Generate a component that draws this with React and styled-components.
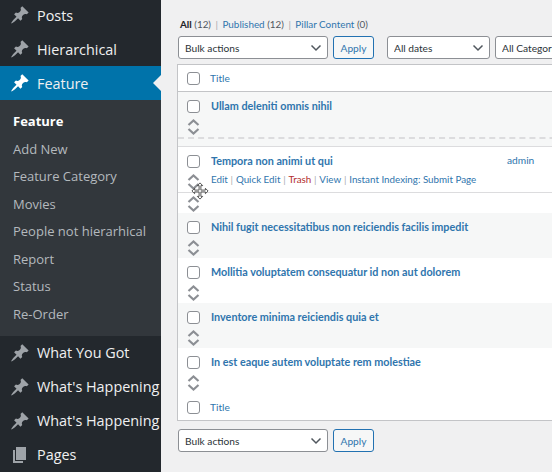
import React from "react";
import styled, { createGlobalStyle } from "styled-components";

const GlobalStyle = createGlobalStyle`
  html, body {
    margin: 0;
    height: 100%;
    overflow: hidden;
    background: #f0f0f1;
  }
  #root {
    height: 100%;
  }
`;

const PIN =
  "M10.44 3.02l1.82-1.82 6.36 6.35-1.83 1.82c-1.05-.68-2.48-.57-3.41.36l-.75.75c-.92.93-1.04 2.35-.35 3.41l-1.83 1.82-2.41-2.41-2.8 2.79c-.42.42-3.38 2.71-3.8 2.29s1.86-3.39 2.28-3.81l2.79-2.79L4.1 9.36l1.83-1.82c1.05.69 2.48.57 3.41-.36l.75-.75c.93-.92 1.04-2.35.35-3.41z";
const PAGE = "M6 15V2h10v13H6zm-1 1h8v2H3V5h2v11z";

const chevron =
  "url(\"data:image/svg+xml,%3Csvg xmlns='http://www.w3.org/2000/svg' width='12' height='8'%3E%3Cpath d='M1.5 1.5 6 6l4.500-4.500' fill='none' stroke='%2350575e' stroke-width='1.5'/%3E%3C/svg%3E\")";

const topItems = [
  { label: "Posts", icon: PIN },
  { label: "Hierarchical", icon: PIN },
];
const subItems = [
  "Add New",
  "Feature Category",
  "Movies",
  "People not hierarhical",
  "Report",
  "Status",
  "Re-Order",
];
const bottomItems = [
  { label: "What You Got", icon: PIN },
  { label: "What's Happening", icon: PIN },
  { label: "What's Happening", icon: PIN },
  { label: "Pages", icon: PAGE },
];
const actions = [
  { label: "Edit" },
  { label: "Quick Edit" },
  { label: "Trash", danger: true },
  { label: "View" },
  { label: "Instant Indexing: Submit Page" },
];

const MenuIcon = ({ d, $active }) => (
  <MenuGlyph viewBox="0 0 20 20" $active={$active}>
    <path d={d} />
  </MenuGlyph>
);

const MenuItem = ({ label, icon, active }) => (
  <MenuRow $active={active}>
    <MenuIcon d={icon} $active={active} />
    <MenuLabel>{label}</MenuLabel>
    {active && <MenuNotch />}
  </MenuRow>
);

const SortArrows = () => (
  <Arrows viewBox="0 0 14 16">
    <path d="M1.500 6l5-4.500 5 4.500M1.500 10l5 4.500 5-4.500" />
  </Arrows>
);

const BulkBar = () => (
  <Bulk>
    <Select $width={150}>
      <option>Bulk actions</option>
    </Select>
    <ApplyButton>Apply</ApplyButton>
  </Bulk>
);

const PostRow = ({ title, alt, author, children }) => (
  <Row $alt={alt}>
    <CheckCol>
      <Checkbox />
      <SortArrows />
    </CheckCol>
    <TitleCol>
      <PostTitle>{title}</PostTitle>
      {children}
    </TitleCol>
    {author && <Author>{author}</Author>}
  </Row>
);

export default function App() {
  return (
    <>
      <GlobalStyle />
      <Page>
        <Sidebar>
          {topItems.map((item) => (
            <MenuItem key={item.label} {...item} />
          ))}
          <MenuItem label="Feature" icon={PIN} active />
          <SubMenu>
            <SubItem $current>Feature</SubItem>
            {subItems.map((item) => (
              <SubItem key={item}>{item}</SubItem>
            ))}
          </SubMenu>
          <LowerMenu>
            {bottomItems.map((item, index) => (
              <MenuItem key={index} {...item} />
            ))}
          </LowerMenu>
        </Sidebar>
        <Main>
          <Filters>
            <strong>All</strong> <Count>(12)</Count>
            <Sep>|</Sep>
            <a>Published</a> <Count>(12)</Count>
            <Sep>|</Sep>
            <a>Pillar Content</a> <Count>(0)</Count>
          </Filters>
          <TopBar>
            <BulkBar />
            <Select $width={103}>
              <option>All dates</option>
            </Select>
            <Select $width={130}>
              <option>All Categories</option>
            </Select>
          </TopBar>
          <Table>
            <HeadRow>
              <Checkbox />
              <HeadTitle>Title</HeadTitle>
            </HeadRow>
            <PostRow title="Ullam deleniti omnis nihil" alt />
            <DropSlot />
            <PostRow title="Tempora non animi ut qui" author="admin">
              <RowActions>
                {actions.map((action, index) => (
                  <React.Fragment key={action.label}>
                    {index > 0 && <ActionSep>|</ActionSep>}
                    <Action $danger={action.danger}>{action.label}</Action>
                  </React.Fragment>
                ))}
              </RowActions>
              <DragCursor viewBox="0 0 20 20">
                <path d="M10 1l3 3h-2v5h5V7l3 3-3 3v-2h-5v5h2l-3 3-3-3h2v-5H4v2l-3-3 3-3v2h5V4H7z" />
              </DragCursor>
            </PostRow>
            <GhostRow>
              <SortArrows />
            </GhostRow>
            <PostRow title="Nihil fugit necessitatibus non reiciendis facilis impedit" alt />
            <PostRow title="Mollitia voluptatem consequatur id non aut dolorem" />
            <PostRow title="Inventore minima reiciendis quia et" alt />
            <PostRow title="In est eaque autem voluptate rem molestiae" />
            <FootRow>
              <Checkbox />
              <HeadTitle>Title</HeadTitle>
            </FootRow>
          </Table>
          <BottomBar>
            <BulkBar />
          </BottomBar>
        </Main>
      </Page>
    </>
  );
}

const Page = styled.div`
  display: flex;
  width: 552px;
  height: 472px;
  overflow: hidden;
  font-family: "Open Sans", sans-serif;
`;

const Sidebar = styled.nav`
  flex: none;
  width: 161px;
  margin-top: -2px;
  background: #23282d;
`;

const MenuRow = styled.div`
  position: relative;
  display: flex;
  align-items: center;
  height: 34px;
  padding-left: 10px;
  background: ${(p) => (p.$active ? "#0073aa" : "transparent")};
  color: #f0f0f1;
`;

const MenuGlyph = styled.svg`
  flex: none;
  width: 20px;
  height: 20px;
  fill: ${(p) => (p.$active ? "#fff" : "#9ea3a8")};
`;

const MenuLabel = styled.span`
  margin-left: 7px;
  font-size: 14.400px;
  white-space: nowrap;
`;

const LowerMenu = styled.div`
  ${MenuLabel} {
    margin-bottom: 2px;
  }
`;

const MenuNotch = styled.span`
  position: absolute;
  top: 9px;
  right: 0;
  border: 8px solid transparent;
  border-right-color: #f0f0f1;
  border-left-width: 0;
`;

const SubMenu = styled.div`
  display: flex;
  flex-direction: column;
  height: 236px;
  padding-top: 7.500px;
  box-sizing: border-box;
  background: #32373c;
`;

const SubItem = styled.div`
  display: flex;
  align-items: center;
  height: 27.500px;
  padding-left: 13px;
  font-size: 13px;
  font-weight: ${(p) => (p.$current ? 700 : 400)};
  color: ${(p) => (p.$current ? "#fff" : "#b4b9be")};
`;

const Main = styled.main`
  flex: none;
  width: 500px;
  padding: 16px 0 0 16px;
  box-sizing: border-box;
  font-family: Lato, "Open Sans", sans-serif;
  font-size: 10.200px;
  color: #50575e;
`;

const Filters = styled.div`
  display: flex;
  align-items: center;
  gap: 2.500px;
  height: 16px;
  padding-left: 3px;
  font-size: 9.900px;
  white-space: pre;

  strong {
    color: #1d2327;
    font-weight: 700;
  }

  a {
    color: #2f75ad;
  }
`;

const Count = styled.span`
  color: #50575e;
`;

const Sep = styled.span`
  margin: 0 2px;
  color: #a7aaad;
`;

const TopBar = styled.div`
  display: flex;
  align-items: center;
  gap: 5px;
  margin: 4px 0 5px 1px;
  height: 23px;
  width: 520px;
`;

const Bulk = styled.div`
  display: flex;
  align-items: center;
  gap: 5px;
  margin-right: 8px;
`;

const Select = styled.select`
  flex: none;
  appearance: none;
  width: ${(p) => p.$width}px;
  height: 23px;
  padding: 0 20px 0 6px;
  border: 1px solid #8c8f94;
  border-radius: 3px;
  background: #fff ${chevron} no-repeat right 5px center;
  font-family: inherit;
  font-size: 10.200px;
  color: #2c3338;
`;

const ApplyButton = styled.button`
  flex: none;
  width: 41px;
  height: 23px;
  padding: 0;
  border: 1px solid #2271b1;
  border-radius: 3px;
  background: #f6f7f7;
  font-family: inherit;
  font-size: 10.200px;
  color: #2f75ad;
`;

const Table = styled.div`
  width: 500px;
  border: 1px solid #c3c4c7;
  background: #fff;
  box-sizing: border-box;
`;

const HeadRow = styled.div`
  display: flex;
  align-items: center;
  height: 26px;
  padding-left: 9px;
  border-bottom: 1px solid #c3c4c7;
`;

const FootRow = styled(HeadRow)`
  height: 26px;
  margin-top: -1px;
  padding-top: 1px;
  border-top: 1px solid #c3c4c7;
  border-bottom: 0;
`;

const HeadTitle = styled.span`
  margin-left: 10px;
  color: #2f75ad;
`;

const Checkbox = styled.span`
  flex: none;
  display: block;
  width: 11px;
  height: 11px;
  border: 1px solid #8c8f94;
  border-radius: 3px;
  background: #fff;
`;

const Row = styled.div`
  position: relative;
  display: flex;
  height: 45px;
  box-sizing: border-box;
  padding: 8px 0 0 9px;
  background: ${(p) => (p.$alt ? "#f6f7f7" : "#fff")};
`;

const CheckCol = styled.div`
  flex: none;
  display: flex;
  flex-direction: column;
  gap: 5.500px;
  width: 24px;
`;

const TitleCol = styled.div`
  flex: 1;
  min-width: 0;
`;

const PostTitle = styled.div`
  font-size: 10.800px;
  font-weight: 700;
  line-height: 11px;
  color: #2f75ad;
  white-space: nowrap;
`;

const Author = styled.span`
  position: absolute;
  top: 7px;
  left: 329px;
  line-height: 13px;
  color: #2f75ad;
`;

const RowActions = styled.div`
  display: flex;
  gap: 2.800px;
  margin-top: 7px;
  font-size: 9.800px;
  line-height: 13px;
  white-space: nowrap;
`;

const Action = styled.span`
  color: ${(p) => (p.$danger ? "#b32d2e" : "#2f75ad")};
`;

const ActionSep = styled.span`
  color: #a7aaad;
`;

const Arrows = styled.svg`
  display: block;
  width: 14px;
  height: 16px;
  fill: none;
  stroke: #8c8f94;
  stroke-width: 2.200;
`;

const DragCursor = styled.svg`
  position: absolute;
  top: 35px;
  left: 13px;
  width: 18px;
  height: 18px;
  fill: #fff;
  stroke: #444;
  stroke-width: 1;
  z-index: 1;
`;

const DropSlot = styled.div`
  height: 10px;
  box-sizing: border-box;
  border-top: 2px dashed #dcdcde;
  border-bottom: 1px solid #dcdcde;
  background: #f6f7f7;
`;

const GhostRow = styled.div`
  height: 21px;
  box-sizing: border-box;
  padding: 3px 0 0 9px;
  border-top: 1px solid #dcdcde;
  background: #fff;
`;

const BottomBar = styled.div`
  display: flex;
  margin: 8px 0 0 1px;
`;
